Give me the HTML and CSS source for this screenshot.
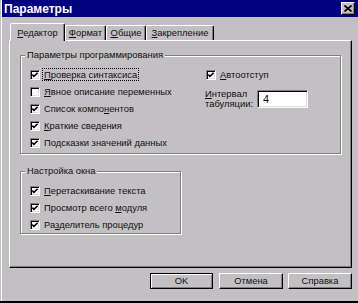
FILE: index.html
```html
<!DOCTYPE html>
<html>
<head>
<meta charset="utf-8">
<link rel="stylesheet" href="styles.css">
</head>
<body>
<div class="window">
  <div class="titlebar">
    <span class="title">Параметры</span>
    <span class="close"><svg width="8" height="7" viewBox="0 0 8 7"><path d="M0.5 0.5L7.5 6.5M7.5 0.5L0.5 6.5" stroke="#000" stroke-width="1.6" fill="none"/></svg></span>
  </div>
  <div class="tabs">
    <div class="tab active t1"><u>Р</u>едактор</div>
    <div class="tab t2"><u>Ф</u>ормат</div>
    <div class="tab t3"><u>О</u>бщие</div>
    <div class="tab t4"><u>З</u>акрепление</div>
  </div>
  <div class="panel">
    <fieldset class="group g1">
      <legend>Параметры программирования</legend>
      <div class="g1-body">
        <div class="col-left">
          <div class="row"><span class="cb on"></span><span class="lbl focus"><u>П</u>роверка синтаксиса</span></div>
          <div class="row"><span class="cb"></span><span class="lbl"><u>Я</u>вное описание переменных</span></div>
          <div class="row"><span class="cb on"></span><span class="lbl">Список компо<u>н</u>ентов</span></div>
          <div class="row"><span class="cb on"></span><span class="lbl"><u>К</u>раткие сведения</span></div>
          <div class="row"><span class="cb on"></span><span class="lbl">По<u>д</u>сказки значений данных</span></div>
        </div>
        <div class="col-right">
          <div class="row"><span class="cb on"></span><span class="lbl"><u>А</u>втоотступ</span></div>
          <div class="tabrow">
            <span class="tablbl"><u>И</u>нтервал<br>табуляции:</span>
            <span class="input">4</span>
          </div>
        </div>
      </div>
    </fieldset>
    <fieldset class="group g2">
      <legend>Настройка окна</legend>
      <div class="row"><span class="cb on"></span><span class="lbl"><u>П</u>еретаскивание текста</span></div>
      <div class="row"><span class="cb on"></span><span class="lbl">Просмотр всего <u>м</u>одуля</span></div>
      <div class="row"><span class="cb on"></span><span class="lbl">Ра<u>з</u>делитель процедур</span></div>
    </fieldset>
  </div>
  <div class="buttons">
    <div class="btn default">OK</div>
    <div class="btn">Отмена</div>
    <div class="btn">Справка</div>
  </div>
</div>
</body>
</html>
```
FILE: styles.css
```css
html, body {
  margin: 0;
  padding: 0;
  background: #c2c0c2;
}
.window {
  width: 358px;
  height: 303px;
  box-sizing: border-box;
  background: #c2c0c2;
  box-shadow: inset 1px 0 0 #c2c0c2, inset 2px 0 0 #ffffff;
  border-bottom: 2px solid #000;
  display: flex;
  flex-direction: column;
  font-family: "Liberation Sans", Arial, sans-serif;
  font-size: 9.4px;
  color: #111;
  overflow: hidden;
}
u { text-decoration: underline; text-underline-offset: 1px; }
.titlebar {
  height: 17px;
  margin-left: 2px;
  background: #000080;
  display: flex;
  align-items: center;
  justify-content: space-between;
  padding: 0 3px 0 2px;
  flex: none;
}
.title {
  color: #fff;
  font-weight: bold;
  font-size: 12px;
  line-height: 14px;
}
.close {
  width: 14px;
  height: 13px;
  box-sizing: border-box;
  background: #c2c0c2;
  border: 1px solid;
  border-color: #fff #000 #000 #fff;
  box-shadow: inset -1px -1px 0 #808080;
  display: flex;
  align-items: center;
  justify-content: center;
}
.close svg { display: block; margin-top: -1px; margin-left: -1px; }
.tabs {
  margin-top: 6px;
  margin-left: 10px;
  height: 17px;
  display: flex;
  align-items: flex-end;
  flex: none;
  position: relative;
  z-index: 1;
}
.tab {
  height: 15px;
  box-sizing: border-box;
  border-top: 1px solid #fff;
  border-left: 1px solid #fff;
  border-right: 1px solid #000;
  border-radius: 2px 2px 0 0;
  box-shadow: inset -1px 0 0 #808080;
  background: #c2c0c2;
  text-align: center;
  line-height: 12px;
  padding-top: 1px;
  white-space: nowrap;
}
.tab.active {
  height: 18px;
  margin-bottom: -1px;
  padding-top: 3px;
}
.t1 { width: 55px; }
.t2 { width: 41px; }
.t3 { width: 40px; }
.t4 { width: 68px; }
.panel {
  margin-left: 9px;
  width: 343px;
  height: 228px;
  box-sizing: border-box;
  border: 1px solid;
  border-color: #fff #000 #000 #fff;
  box-shadow: inset -1px -1px 0 #808080;
  flex: none;
  padding-top: 8px;
  padding-left: 10px;
}
.group {
  margin: 0;
  border: 1px solid #808080;
  box-shadow: inset 1px 1px 0 #fff, 1px 1px 0 #fff;
  padding: 5px 0 0 9px;
  min-inline-size: 0;
  box-sizing: border-box;
}
.group legend {
  padding: 0 2px;
  margin-left: -5px;
  line-height: 12px;
  background: #c2c0c2;
}
.g1 {
  width: 321px;
  padding-bottom: 2px;
}
.g2 {
  width: 161px;
  margin-top: 11px;
  padding-bottom: 0;
}
.g1-body {
  display: flex;
}
.col-left {
  width: 176px;
}
.col-right {
  flex: 1;
}
.row {
  height: 17px;
  display: flex;
  align-items: center;
  white-space: nowrap;
}
.cb {
  width: 10px;
  height: 10px;
  box-sizing: border-box;
  border: 1px solid;
  border-color: #808080 #fff #fff #808080;
  box-shadow: inset 1px 1px 0 #000, inset -1px -1px 0 #dfdfdf;
  background: #fff;
  flex: none;
  margin-right: 2px;
}
.cb.on {
  background: #fff url("data:image/svg+xml;utf8,<svg xmlns='http://www.w3.org/2000/svg' width='8' height='8' viewBox='0 0 8 8'><path d='M1.3 3.6L3 5.4L6.6 1.7' stroke='black' stroke-width='1.6' fill='none'/></svg>") no-repeat center;
}
.lbl {
  padding: 0 1px;
  border: 1px solid transparent;
  line-height: 11px;
}
.lbl.focus {
  border: 1px dotted #000;
}
.tabrow {
  display: flex;
  align-items: center;
  margin-top: 6px;
  margin-left: -1px;
}
.tablbl {
  width: 52px;
  line-height: 10px;
  white-space: nowrap;
}
.input {
  width: 51px;
  height: 18px;
  box-sizing: border-box;
  border: 1px solid;
  border-color: #808080 #fff #fff #808080;
  box-shadow: inset 1px 1px 0 #000, inset -1px -1px 0 #dfdfdf;
  background: #fff;
  padding: 2px 0 0 5px;
  line-height: 12px;
  font-size: 11px;
}
.buttons {
  display: flex;
  justify-content: flex-end;
  margin-top: 5px;
  margin-right: 6px;
  gap: 5px;
  flex: none;
}
.btn {
  width: 64px;
  height: 16px;
  box-sizing: border-box;
  border: 1px solid;
  border-color: #fff #000 #000 #fff;
  box-shadow: inset -1px -1px 0 #808080;
  text-align: center;
  line-height: 13px;
}
.btn.default {
  width: 63px;
  margin-right: 1px;
  border-color: #000;
  box-shadow: inset 1px 1px 0 #fff, inset -1px -1px 0 #808080;
}
```
